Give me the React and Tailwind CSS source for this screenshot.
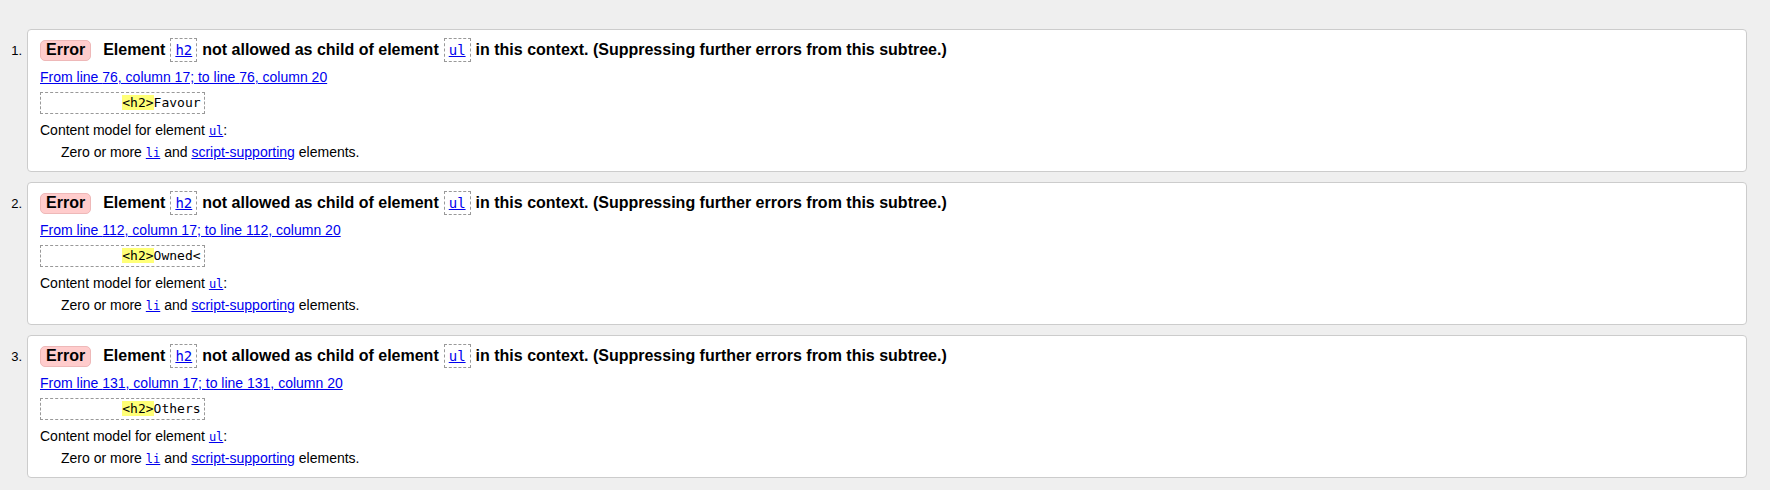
import React from "react";

const sans = { fontFamily: '"Liberation Sans", Arial, sans-serif' };

const messages = [
  { line: 76, snippet: "Favour" },
  { line: 112, snippet: "Owned<" },
  { line: 131, snippet: "Others" },
];

const CodeBox = ({ children }) => (
  <span className="mx-[5px] inline-flex h-[24px] items-center border border-dashed border-[#999999] px-[4px] font-['DejaVu_Sans_Mono',monospace] text-[14px] font-normal leading-[20px]">
    <a href="#" className="text-[#0000ee] underline">
      {children}
    </a>
  </span>
);

const InlineCode = ({ children }) => (
  <a href="#" className="font-['DejaVu_Sans_Mono',monospace] text-[12px] text-[#0000ee] underline">
    {children}
  </a>
);

const Message = ({ index, line, snippet }) => (
  <li className="flex">
    <span className="w-[27px] shrink-0 pr-[5px] pt-[14px] text-right text-[13px] leading-[15px] text-black">
      {index}.
    </span>
    <div className="h-[143px] flex-1 rounded-[4px] border border-[#cccccc] bg-white pl-[12px] pt-[8px] text-black">
      {/* heading */}
      <div className="flex h-[24px] items-center whitespace-nowrap text-[16px] font-bold leading-[24px]">
        <span className="mr-[12px] flex h-[21px] items-center rounded-[5px] border border-[#eeb8b8] bg-[#ffcccc] px-[5px]">
          Error
        </span>
        <span>Element</span>
        <CodeBox>h2</CodeBox>
        <span>not allowed as child of element</span>
        <CodeBox>ul</CodeBox>
        <span>in this context. (Suppressing further errors from this subtree.)</span>
      </div>

      <div className="mt-[5px] text-[14px] leading-[20px]">
        <a href="#" className="text-[#0000ee] underline">
          From line {line}, column 17; to line {line}, column 20
        </a>
      </div>

      <div className="mt-[5px] h-[22px] w-fit border border-dashed border-[#999999] px-[3px] font-['DejaVu_Sans_Mono',monospace] text-[13px] leading-[20px] whitespace-pre">
        {"          "}
        <span className="bg-[#ffff77]">{"<h2>"}</span>
        {snippet}
      </div>

      <div className="mt-[6px] text-[14px] leading-[20px]">
        Content model for element <InlineCode>ul</InlineCode>:
      </div>
      <div className="mt-[1px] pl-[21px] text-[14px] leading-[20px]">
        Zero or more <InlineCode>li</InlineCode> and{" "}
        <a href="#" className="text-[#0000ee] underline">
          script-supporting
        </a>{" "}
        elements.
      </div>
    </div>
  </li>
);

export default function App() {
  return (
    <div className="min-h-screen bg-[#efefef] pt-[29px] pr-[23px]" style={sans}>
      <ol className="flex flex-col gap-[10px]">
        {messages.map((m, i) => (
          <Message key={m.line} index={i + 1} line={m.line} snippet={m.snippet} />
        ))}
      </ol>
    </div>
  );
}
